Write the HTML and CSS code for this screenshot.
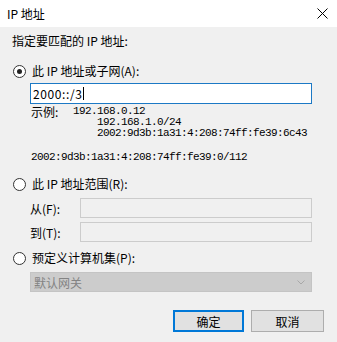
FILE: index.html
```html
<!DOCTYPE html>
<html>
<head>
<meta charset="utf-8">
<link rel="stylesheet" href="styles.css">
</head>
<body>
<div class="dialog">
  <div class="titlebar">
    <span class="title">IP 地址</span>
    <svg class="close" width="11" height="11" viewBox="0 0 11 11"><path d="M0.5 0.5 L10.5 10.5 M10.5 0.5 L0.5 10.5" stroke="#000" stroke-width="1" fill="none"/></svg>
  </div>
  <div class="content">
    <div class="heading">指定要匹配的 IP 地址:</div>

    <label class="radio-row r1"><span class="radio checked"></span><span>此 IP 地址或子网(A):</span></label>
    <div class="indent">
      <div class="textbox active"><span class="val">2000::/3</span><span class="caret"></span></div>
      <div class="examples">
        <div class="ex-row"><span class="ex-label">示例:</span><span class="mono">192.168.0.12</span></div>
        <div class="mono ex-more">192.168.1.0/24</div>
        <div class="mono ex-more">2002:9d3b:1a31:4:208:74ff:fe39:6c43</div>
        <div class="mono ex-last">2002:9d3b:1a31:4:208:74ff:fe39:0/112</div>
      </div>
    </div>

    <label class="radio-row r2"><span class="radio"></span><span>此 IP 地址范围(R):</span></label>
    <div class="indent">
      <div class="range-row first"><span class="range-label">从(F):</span><div class="textbox disabled"></div></div>
      <div class="range-row"><span class="range-label">到(T):</span><div class="textbox disabled"></div></div>
    </div>

    <label class="radio-row r3"><span class="radio"></span><span>预定义计算机集(P):</span></label>
    <div class="indent">
      <div class="select">
        <span>默认网关</span>
        <svg width="8" height="5" viewBox="0 0 8 5"><path d="M0.5 0.5 L4 4 L7.5 0.5" stroke="#a8a8a8" fill="none"/></svg>
      </div>
    </div>

    <div class="buttons">
      <button class="btn default">确定</button>
      <button class="btn">取消</button>
    </div>
  </div>
</div>
</body>
</html>
```
FILE: styles.css
```css
html, body {
  margin: 0;
  padding: 0;
}
body {
  width: 337px;
  height: 342px;
  background: #f0f0f0;
  font-family: "Noto Sans CJK SC", "Liberation Sans", sans-serif;
  font-size: 12px;
  color: #000;
  overflow: hidden;
}
.dialog {
  display: flex;
  flex-direction: column;
}
.titlebar {
  height: 27px;
  background: #fff;
  display: flex;
  align-items: center;
  justify-content: space-between;
  padding: 0 9px 0 7px;
}
.title {
  line-height: 16px;
}
.close {
  display: block;
}
.content {
  padding: 0 25px 0 12px;
  display: flex;
  flex-direction: column;
}
.heading {
  margin-top: 6px;
  line-height: 16px;
  height: 16px;
}
.radio-row {
  display: flex;
  align-items: center;
  gap: 6px;
  height: 16px;
  line-height: 16px;
  padding-left: 1px;
}
.r1 { margin-top: 14px; }
.r2 { margin-top: 13px; }
.r3 { margin-top: 8px; }
.radio {
  width: 11px;
  height: 11px;
  border: 1px solid #333;
  border-radius: 50%;
  background: #fff;
  position: relative;
  box-sizing: content-box;
}
.radio.checked::after {
  content: "";
  position: absolute;
  left: 3px;
  top: 3px;
  width: 5px;
  height: 5px;
  border-radius: 50%;
  background: #222;
}
.indent {
  padding-left: 18px;
}
.textbox {
  box-sizing: border-box;
  height: 21px;
  border: 1px solid #7a7a7a;
  background: #fff;
  line-height: 19px;
  padding-left: 2px;
}
.textbox.active {
  margin-top: 4px;
  border-color: #1c79c5;
  display: flex;
  align-items: center;
}
.val {
  letter-spacing: 0.6px;
}
.caret {
  display: inline-block;
  width: 1px;
  height: 13px;
  background: #000;
  margin-left: 1px;
}
.textbox.disabled {
  flex: 1;
  height: 20px;
  border-color: #cccccc;
  background: #f0f0f0;
}
.examples {
  margin-top: 2px;
  padding-left: 1px;
}
.mono {
  font-family: "Liberation Mono", monospace;
  font-size: 11px;
  letter-spacing: -0.6px;
  line-height: 11px;
  height: 11px;
}
.ex-row {
  display: flex;
  align-items: center;
  height: 11px;
}
.ex-label {
  width: 42px;
  line-height: 11px;
}
.ex-more {
  padding-left: 66px;
}
.ex-last {
  margin-top: 13px;
}
.range-row {
  display: flex;
  align-items: center;
  margin-top: 4px;
}
.range-row.first {
  margin-top: 6px;
}
.range-label {
  width: 50px;
}
.select {
  margin-top: 6px;
  box-sizing: border-box;
  height: 20px;
  border: 1px solid #c4c4c4;
  background: #cccccc;
  color: #838383;
  display: flex;
  align-items: center;
  justify-content: space-between;
  padding: 0 6px 0 3px;
  font-size: 12px;
}
.select svg {
  display: block;
}
.buttons {
  margin-top: 18px;
  display: flex;
  justify-content: flex-end;
  gap: 7px;
  margin-right: -12px;
}
.btn {
  box-sizing: border-box;
  width: 73px;
  height: 22px;
  border: 1px solid #adadad;
  background: #e1e1e1;
  font-family: "Noto Sans CJK SC", sans-serif;
  font-size: 12px;
  padding: 0;
  color: #000;
}
.btn.default {
  width: 71px;
  border: 2px solid #0078d7;
}
```
